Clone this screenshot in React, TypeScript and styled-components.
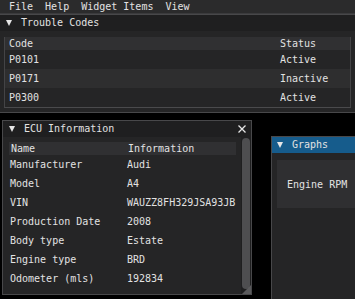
import styled, { createGlobalStyle } from 'styled-components';

const GlobalStyle = createGlobalStyle`
    html, body {
        margin: 0;
        padding: 0;
        background: #000;
    }
    body {
        font-family: "DejaVu Sans Mono", "Liberation Mono", monospace;
        font-size: 10px;
        color: #e2e2e2;
        overflow: hidden;
    }
`;

const Screen = styled.div`
    width: 355px;
    height: 299px;
    display: flex;
    flex-direction: column;
    overflow: hidden;
`;

const MenuBar = styled.nav`
    height: 13px;
    display: flex;
    align-items: center;
    padding-left: 3px;
    background: #2b2b2c;
    border-bottom: 1px solid #3b3b3d;
    flex-shrink: 0;
`;

const MenuItem = styled.span`
    padding: 0 6px;
    line-height: 13px;
`;

const Desktop = styled.div`
    position: relative;
    flex: 1;
`;

const Window = styled.section<{ x: number; y: number; w: number; h: number }>`
    position: absolute;
    left: ${(p) => p.x}px;
    top: ${(p) => p.y}px;
    width: ${(p) => p.w}px;
    height: ${(p) => p.h}px;
    box-sizing: border-box;
    background: #252526;
    border: 1px solid #48484a;
    display: flex;
    flex-direction: column;
`;

const TitleBar = styled.header<{ active?: boolean }>`
    height: 16px;
    display: flex;
    align-items: center;
    padding-left: ${(p) => (p.active ? 5 : 6)}px;
    background: ${(p) => (p.active ? '#165c8c' : '#1f1f20')};
    flex-shrink: 0;
    gap: 9px;
`;

const Arrow = styled.span`
    width: 0;
    height: 0;
    border-left: 3px solid transparent;
    border-right: 3px solid transparent;
    border-top: 6px solid #e6e6e6;
`;

const TitleText = styled.span`
    flex: 1;
    line-height: 16px;
`;

const CloseButton = styled.span`
    width: 14px;
    display: flex;
    justify-content: center;
    margin-right: 2px;
`;

const TroubleTable = styled.div`
    margin: 6px 4px 0 4px;
    border-left: 1px solid #444446;
    border-right: 1px solid #444446;
    border-bottom: 1px solid #4a4a4c;
    display: grid;
    grid-template-columns: 271px 1fr;
`;

const Cell = styled.div<{ head?: boolean; alt?: boolean }>`
    height: ${(p) => (p.head ? 13 : 19)}px;
    line-height: ${(p) => (p.head ? 13 : 19)}px;
    padding-left: 4px;
    background: ${(p) => (p.head ? '#303032' : p.alt ? '#2e2e2f' : 'transparent')};
    white-space: nowrap;
`;

const EcuBody = styled.div`
    flex: 1;
    display: flex;
    min-height: 0;
`;

const EcuContent = styled.div`
    flex: 1;
    padding: 5px 5px 0 6px;
`;

const InfoTable = styled.div`
    display: grid;
    grid-template-columns: 117px 1fr;
`;

const InfoCell = styled.div<{ head?: boolean }>`
    height: ${(p) => (p.head ? 13 : 19)}px;
    line-height: ${(p) => (p.head ? 13 : 19)}px;
    padding-left: ${(p) => (p.head ? 2 : 1)}px;
    background: ${(p) => (p.head ? '#303032' : 'transparent')};
    white-space: nowrap;
    overflow: hidden;
`;

const ScrollTrack = styled.div`
    position: relative;
    width: 10px;
    background: #1f1f20;
    display: flex;
    justify-content: center;
    padding-top: 1px;
    padding-bottom: 5px;
`;

const ScrollGrab = styled.div`
    width: 8px;
    border-radius: 4px;
    background: #4e4e50;
`;

const Grip = styled.svg`
    position: absolute;
    right: 0;
    bottom: 0;
`;

const GraphBody = styled.div`
    padding: 7px 0 0 5px;
`;

const PlotFrame = styled.div`
    height: 48px;
    background: #2f2f31;
    display: flex;
    align-items: center;
    padding-left: 10px;
    white-space: nowrap;
`;

const troubleCodes = [
    { code: 'P0101', status: 'Active' },
    { code: 'P0171', status: 'Inactive' },
    { code: 'P0300', status: 'Active' },
];

const ecuInfo = [
    ['Manufacturer', 'Audi'],
    ['Model', 'A4'],
    ['VIN', 'WAUZZ8FH329JSA93JB'],
    ['Production Date', '2008'],
    ['Body type', 'Estate'],
    ['Engine type', 'BRD'],
    ['Odometer (mls)', '192834'],
];

export default function App() {
    return (
        <Screen>
            <GlobalStyle />
            <MenuBar>
                <MenuItem>File</MenuItem>
                <MenuItem>Help</MenuItem>
                <MenuItem>Widget Items</MenuItem>
                <MenuItem>View</MenuItem>
            </MenuBar>
            <Desktop>
                <Window x={-1} y={0} w={357} h={99}>
                    <TitleBar>
                        <Arrow />
                        <TitleText>Trouble Codes</TitleText>
                    </TitleBar>
                    <TroubleTable>
                        <Cell head>Code</Cell>
                        <Cell head>Status</Cell>
                        {troubleCodes.map((row, i) => (
                            <>
                                <Cell key={row.code} alt={i === 1}>{row.code}</Cell>
                                <Cell key={row.code + 's'} alt={i === 1}>{row.status}</Cell>
                            </>
                        ))}
                    </TroubleTable>
                </Window>

                <Window x={2} y={106} w={250} h={175}>
                    <TitleBar>
                        <Arrow />
                        <TitleText>ECU Information</TitleText>
                        <CloseButton>
                            <svg width="8" height="8" viewBox="0 0 8 8">
                                <path d="M0.5 0.5 L7.5 7.5 M7.5 0.5 L0.5 7.5" stroke="#e6e6e6" strokeWidth="1.3" />
                            </svg>
                        </CloseButton>
                    </TitleBar>
                    <EcuBody>
                        <EcuContent>
                            <InfoTable>
                                <InfoCell head>Name</InfoCell>
                                <InfoCell head>Information</InfoCell>
                                {ecuInfo.map(([name, value]) => (
                                    <>
                                        <InfoCell key={name}>{name}</InfoCell>
                                        <InfoCell key={name + 'v'}>{value}</InfoCell>
                                    </>
                                ))}
                            </InfoTable>
                        </EcuContent>
                        <ScrollTrack>
                            <ScrollGrab />
                            <Grip width="10" height="10" viewBox="0 0 10 10">
                                <path d="M10 1 L10 10 L1 10 Z" fill="#5a5a5c" />
                            </Grip>
                        </ScrollTrack>
                    </EcuBody>
                </Window>

                <Window x={271} y={122} w={90} h={200}>
                    <TitleBar active>
                        <Arrow />
                        <TitleText>Graphs</TitleText>
                    </TitleBar>
                    <GraphBody>
                        <PlotFrame>Engine RPM</PlotFrame>
                    </GraphBody>
                </Window>
            </Desktop>
        </Screen>
    );
}
